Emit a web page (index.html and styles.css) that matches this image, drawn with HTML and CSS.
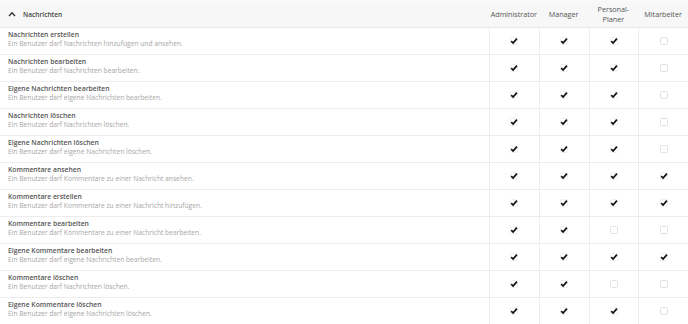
FILE: index.html
```html
<!DOCTYPE html>
<html lang="de">
<head>
<meta charset="utf-8">
<title>Nachrichten Rechte</title>
<link rel="stylesheet" href="styles.css">
</head>
<body>
<div class="perm">
  <div class="head">
    <div class="head-title">
      <svg class="chev" width="8" height="6" viewBox="0 0 8 6"><path d="M1 5 L4 1.8 L7 5" fill="none" stroke="#333" stroke-width="1.4"/></svg>
      <span>Nachrichten</span>
    </div>
    <div class="role">Administrator</div>
    <div class="role">Manager</div>
    <div class="role">Personal-<br>Planer</div>
    <div class="role">Mitarbeiter</div>
  </div>
  <div id="rows"></div>
</div>
<template id="check"><span class="box on"><svg width="8" height="8" viewBox="0 0 8 8"><path d="M1.2 4.2 L3.1 6.1 L6.9 1.6" fill="none" stroke="#111" stroke-width="1.7"/></svg></span></template>
<script src="app.js"></script>
</body>
</html>
```
FILE: styles.css
```css
html, body {
  margin: 0;
  padding: 0;
  background: #fff;
}
body {
  font-family: "Open Sans", "Liberation Sans", sans-serif;
  color: #555;
}
.perm {
  width: 688px;
}
.head {
  display: grid;
  grid-template-columns: 489px repeat(4, 1fr);
  height: 26px;
  background: #f7f7f7;
  border-top: 1px solid #fbfbfb;
  border-bottom: 1px solid #e9e9e9;
  align-items: center;
}
.head-title {
  display: flex;
  align-items: center;
  gap: 7px;
  padding-left: 8px;
  font-size: 6.6px;
  font-weight: 600;
  color: #444;
}
.chev {
  display: block;
}
.role {
  text-align: center;
  font-size: 7.2px;
  line-height: 10px;
  color: #555;
}
.row {
  display: grid;
  grid-template-columns: 489px repeat(4, 1fr);
  height: 26px;
  border-bottom: 1px solid #ececec;
}
.info {
  padding: 1.5px 0 0 8px;
  display: flex;
  flex-direction: column;
}
.title {
  font-size: 6.8px;
  line-height: 9.5px;
  font-weight: 600;
  color: #555;
}
.desc {
  font-size: 6.7px;
  line-height: 9.5px;
  color: #a6a6a6;
}
.cell {
  border-left: 1px solid #eeeeee;
  display: flex;
  align-items: center;
  justify-content: center;
}
.box {
  width: 6px;
  height: 6px;
  border: 1px solid #e2e2e2;
  border-radius: 1.5px;
  display: flex;
  align-items: center;
  justify-content: center;
  position: relative;
}
.box.on {
  border-color: #f0f0f0;
}
.box.on svg {
  position: absolute;
  left: -1px;
  top: -1px;
}
```
FILE: app.js
```js
var data = [
  ["Nachrichten erstellen", "Ein Benutzer darf Nachrichten hinzufügen und ansehen.", [1,1,1,0]],
  ["Nachrichten bearbeiten", "Ein Benutzer darf Nachrichten bearbeiten.", [1,1,1,0]],
  ["Eigene Nachrichten bearbeiten", "Ein Benutzer darf eigene Nachrichten bearbeiten.", [1,1,1,0]],
  ["Nachrichten löschen", "Ein Benutzer darf Nachrichten löschen.", [1,1,1,0]],
  ["Eigene Nachrichten löschen", "Ein Benutzer darf eigene Nachrichten löschen.", [1,1,1,0]],
  ["Kommentare ansehen", "Ein Benutzer darf Kommentare zu einer Nachricht ansehen.", [1,1,1,1]],
  ["Kommentare erstellen", "Ein Benutzer darf Kommentare zu einer Nachricht hinzufügen.", [1,1,1,1]],
  ["Kommentare bearbeiten", "Ein Benutzer darf Kommentare zu einer Nachricht bearbeiten.", [1,1,0,0]],
  ["Eigene Kommentare bearbeiten", "Ein Benutzer darf eigene Nachrichten bearbeiten.", [1,1,1,1]],
  ["Kommentare löschen", "Ein Benutzer darf Nachrichten löschen.", [1,1,0,0]],
  ["Eigene Kommentare löschen", "Ein Benutzer darf eigene Nachrichten löschen.", [1,1,1,0]]
];
var rows = document.getElementById("rows");
var tpl = document.getElementById("check");
data.forEach(function (d) {
  var row = document.createElement("div");
  row.className = "row";
  var info = document.createElement("div");
  info.className = "info";
  var t = document.createElement("div");
  t.className = "title";
  t.textContent = d[0];
  var s = document.createElement("div");
  s.className = "desc";
  s.textContent = d[1];
  info.appendChild(t);
  info.appendChild(s);
  row.appendChild(info);
  d[2].forEach(function (v) {
    var c = document.createElement("div");
    c.className = "cell";
    if (v) {
      c.appendChild(tpl.content.cloneNode(true));
    } else {
      var b = document.createElement("span");
      b.className = "box";
      c.appendChild(b);
    }
    row.appendChild(c);
  });
  rows.appendChild(row);
});
```
